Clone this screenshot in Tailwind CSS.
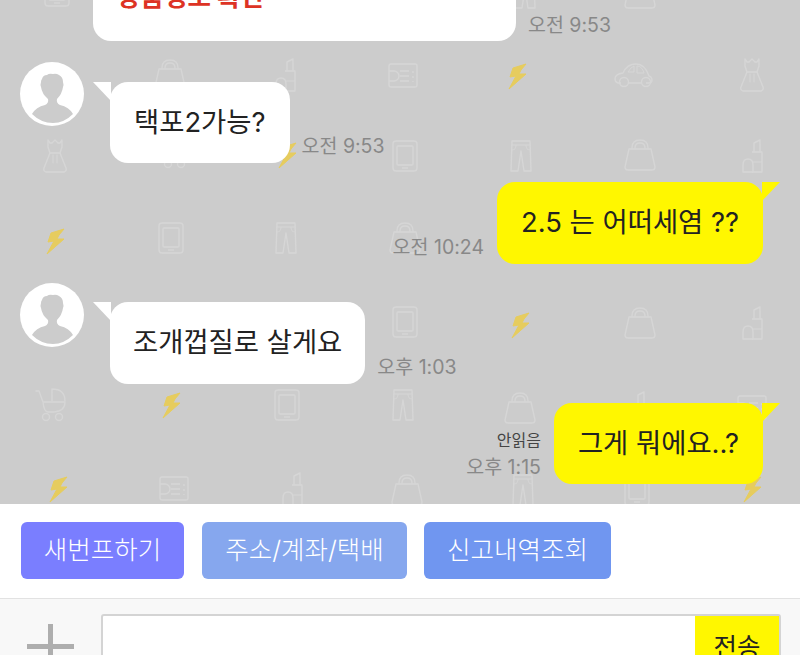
<!DOCTYPE html>
<html lang="ko">

<head>
    <meta charset="UTF-8" />
    <title>채팅</title>
    <script src="https://cdn.jsdelivr.net/npm/@tailwindcss/browser@4"></script>
</head>

<body class="w-[800px] h-[655px] overflow-hidden bg-white font-['Inter','Noto_Sans_CJK_KR',sans-serif]">

    <!-- chat - start -->
    <div class="relative h-[504px] overflow-hidden bg-[#cccccc]">

        <!-- wallpaper -->
        <svg class="absolute left-0 top-0" width="800" height="504" viewBox="0 0 800 504" fill="none">
            <defs>
                <g id="dress" stroke="#d6d6d6" stroke-width="1.4" stroke-linejoin="round" stroke-linecap="round">
                    <path d="M-7 -16v7l2 6h10l2 -6v-7l-2 3h-2l-3 -3l-3 3h-2z" />
                    <path d="M-5 -3l-6 15q-1 3 2 4h18q3 -1 2 -4l-6 -15" />
                    <path d="M-2 -1v8M2 -1v8" stroke-width="1" />
                </g>
                <g id="bag" stroke="#d6d6d6" stroke-width="1.4" stroke-linejoin="round">
                    <path d="M-11 -6h22l4 18q0 3 -3 3h-24q-3 0 -3 -3z" />
                    <path d="M-8 -6v-1q0 -8 8 -8t8 8v1M-5 -6v-1q0 -5 5 -5t5 5v1" />
                </g>
                <g id="lipstick" stroke="#d6d6d6" stroke-width="1.4" stroke-linejoin="round">
                    <path d="M2 -4v-9l6 -3v12" />
                    <path d="M0 -4h10v20h-10" />
                    <path d="M-9 16v-7q0 -6 5 -6t5 6v7z" />
                    <path d="M0 6h10" stroke-width="1" />
                </g>
                <g id="tablet" stroke="#d6d6d6" stroke-width="1.4" stroke-linejoin="round">
                    <rect x="-12" y="-15" width="24" height="30" rx="3" />
                    <rect x="-8" y="-10" width="16" height="19" rx="1" />
                    <path d="M-3 12h6" />
                </g>
                <g id="pants" stroke="#d6d6d6" stroke-width="1.4" stroke-linejoin="round">
                    <path d="M-9 -15h18l1 30h-7l-3 -20l-3 20h-7z" />
                    <path d="M-9 -11h18M-5 -11q0 5 -4 5M5 -11q0 5 4 5" stroke-width="1" />
                </g>
                <g id="wallet" stroke="#d6d6d6" stroke-width="1.4" stroke-linejoin="round">
                    <rect x="-14" y="-12" width="28" height="23" rx="2" />
                    <path d="M-14 -5h5a5 5 0 0 1 0 10h-5" />
                    <path d="M-3 -5h9M-3 0h9M-3 5h9M10 -5v2M10 0v2M10 5v1" />
                </g>
                <g id="car" stroke="#d6d6d6" stroke-width="1.4" stroke-linejoin="round">
                    <path d="M-13 7h-3q-3 -1 -3 -4q0 -5 8 -6q4 -9 13 -9q9 0 13 12q3 1 3 4q0 3 -3 3h-3M-6 7h13" />
                    <circle cx="-10" cy="6" r="4.5" />
                    <circle cx="12" cy="6" r="4.5" />
                    <path d="M-6 -4q3 -5 6 -6v6zM3 -10q5 0 7 7h-7z" stroke-width="1" />
                </g>
                <g id="stroller" stroke="#d6d6d6" stroke-width="1.4" stroke-linejoin="round" stroke-linecap="round">
                    <path d="M-14 -14h3l4 11h22q0 9 -11 10h-6q-4 0 -5 -10" />
                    <path d="M2 -4v-12q13 0 13 12" />
                    <circle cx="-4" cy="12" r="3.5" />
                    <circle cx="9" cy="12" r="3.5" />
                </g>
                <path id="bolt" d="M9 -12L-4 -8L-7 1L-1 0L-8 13L9 -2L2 -2L4 -6z" fill="#e6cc5e" stroke="#e6cc5e" stroke-width="1" stroke-linejoin="round" />
            </defs>

            <use href="#tablet" x="57" y="-9" />
            <use href="#pants" x="525" y="-7" />
            <use href="#bag" x="640" y="-7" />
            <use href="#bag" x="170" y="75" />
            <use href="#lipstick" x="285" y="75" />
            <use href="#wallet" x="403" y="76" />
            <use href="#bolt" x="517" y="76" />
            <use href="#car" x="634" y="76" />
            <use href="#dress" x="752" y="75" />
            <use href="#dress" x="55" y="156" />
            <use href="#stroller" x="172" y="152" />
            <use href="#bolt" x="287" y="155" />
            <use href="#tablet" x="405" y="156" />
            <use href="#pants" x="521" y="156" />
            <use href="#bag" x="640" y="155" />
            <use href="#lipstick" x="752" y="156" />
            <use href="#bolt" x="55" y="241" />
            <use href="#tablet" x="171" y="238" />
            <use href="#pants" x="286" y="238" />
            <use href="#bag" x="405" y="238" />
            <use href="#tablet" x="405" y="322" />
            <use href="#bolt" x="520" y="325" />
            <use href="#bag" x="640" y="323" />
            <use href="#lipstick" x="752" y="323" />
            <use href="#stroller" x="50" y="405" />
            <use href="#bolt" x="171" y="405" />
            <use href="#tablet" x="287" y="405" />
            <use href="#pants" x="403" y="405" />
            <use href="#bag" x="520" y="408" />
            <use href="#lipstick" x="636" y="408" />
            <use href="#wallet" x="752" y="408" />
            <use href="#bolt" x="58" y="489" />
            <use href="#wallet" x="174" y="489" />
            <use href="#lipstick" x="292" y="489" />
            <use href="#bag" x="407" y="490" />
            <use href="#pants" x="523" y="490" />
            <use href="#tablet" x="637" y="490" />
            <use href="#bolt" x="752" y="489" />
        </svg>

        <div class="relative flex flex-col gap-[19px] px-[20px] pr-[37px] -mt-[59px]">

            <!-- first message, cut off by the top edge -->
            <div class="flex items-end gap-[12px] pl-[73px] mb-[2px]">
                <div class="w-[423px] h-[100px] bg-white rounded-b-[18px] pl-[24px] pr-[24px] pt-[40px] flex justify-between">
                    <span class="text-[25.5px] leading-[32px] font-bold text-[#dd3324]">상품정보 확인</span>
                    <svg class="mt-[-8px]" width="14" height="30" viewBox="0 0 14 30" fill="none" stroke="#dd3324" stroke-width="2"><path d="M2 6l9 9l-9 9" /></svg>
                </div>
                <span class="text-[19.5px] leading-[24px] text-[#888888] mb-[4px]">오전 9:53</span>
            </div>

            <!-- incoming -->
            <div class="flex items-start">
                <svg class="shrink-0" width="64" height="64" viewBox="0 0 64 64">
                    <circle cx="32" cy="32" r="32" fill="#ffffff" />
                    <path d="M12 52q4 -7 13 -9q4 -2 3 -6q-6 -5 -7 -12q-1 -2 0 -5q0 -2 1 -3q1 -4 5 -4q2 -2 6 -1q3 -1 6 1q4 2 4 7q1 3 0 5q-1 7 -6 12q-1 4 3 6q9 2 13 9q-9 9 -20 9q-12 0 -21 -9z" fill="#cccccc" />
                </svg>
                <div class="relative mt-[20px] ml-[26px] h-[81px] flex items-center bg-white rounded-[18px] px-[24px] pt-[1px] text-[27.4px] text-[#222222]">
                    <svg class="absolute left-[-17px] top-0" width="18" height="19" viewBox="0 0 18 19"><path d="M0 0h18v19z" fill="#ffffff" /></svg>
                    택포2가능?
                </div>
                <span class="self-end ml-[12px] text-[19.5px] leading-[24px] text-[#888888] mb-[5px]">오전 9:53</span>
            </div>

            <!-- outgoing -->
            <div class="flex items-end justify-end">
                <span class="mr-[13px] text-[19.5px] leading-[24px] text-[#888888] mb-[5px]">오전 10:24</span>
                <div class="relative h-[82px] flex items-center bg-[#fff700] rounded-[18px] px-[24px] text-[27.4px] text-[#222222]">
                    <svg class="absolute right-[-17px] top-0" width="18" height="19" viewBox="0 0 18 19"><path d="M18 0h-18v19z" fill="#fff700" /></svg>
                    2.5 는 어떠세염 ??
                </div>
            </div>

            <!-- incoming -->
            <div class="flex items-start">
                <svg class="shrink-0" width="64" height="64" viewBox="0 0 64 64">
                    <circle cx="32" cy="32" r="32" fill="#ffffff" />
                    <path d="M12 52q4 -7 13 -9q4 -2 3 -6q-6 -5 -7 -12q-1 -2 0 -5q0 -2 1 -3q1 -4 5 -4q2 -2 6 -1q3 -1 6 1q4 2 4 7q1 3 0 5q-1 7 -6 12q-1 4 3 6q9 2 13 9q-9 9 -20 9q-12 0 -21 -9z" fill="#cccccc" />
                </svg>
                <div class="relative mt-[19px] ml-[26px] h-[82px] flex items-center bg-white rounded-[18px] px-[23px] text-[27.4px] text-[#222222]">
                    <svg class="absolute left-[-17px] top-0" width="18" height="19" viewBox="0 0 18 19"><path d="M0 0h18v19z" fill="#ffffff" /></svg>
                    조개껍질로 살게요
                </div>
                <span class="self-end ml-[12px] text-[19.5px] leading-[24px] text-[#888888] mb-[5px]">오후 1:03</span>
            </div>

            <!-- outgoing, unread -->
            <div class="flex items-end justify-end">
                <div class="flex flex-col items-end mr-[13px] mb-[5px]">
                    <span class="text-[16px] leading-[22px] text-[#444444] mb-[4px]">안읽음</span>
                    <span class="text-[19.5px] leading-[24px] text-[#888888]">오후 1:15</span>
                </div>
                <div class="relative h-[81px] flex items-center bg-[#fff700] rounded-[18px] px-[24px] text-[27.4px] text-[#222222]">
                    <svg class="absolute right-[-17px] top-0" width="18" height="19" viewBox="0 0 18 19"><path d="M18 0h-18v19z" fill="#fff700" /></svg>
                    그게 뭐에요..?
                </div>
            </div>
        </div>
    </div>
    <!-- chat - end -->

    <!-- quick buttons -->
    <div class="h-[94px] flex items-start gap-[17px] pl-[21px] pt-[18px] bg-white">
        <button class="w-[163px] h-[57px] rounded-[6px] bg-[#7a7eff] text-white text-[25.5px] font-light">새번프하기</button>
        <button class="w-[205px] h-[57px] ml-[1px] rounded-[6px] bg-[#86a7ee] text-white text-[25.5px] font-light">주소/계좌/택배</button>
        <button class="w-[187px] h-[57px] rounded-[6px] bg-[#7096f0] text-white text-[25.5px] font-light">신고내역조회</button>
    </div>

    <!-- input bar -->
    <div class="h-[57px] flex items-start bg-[#f8f8f8] border-t border-[#e2e2e2] pt-[15px] pl-[27px]">
        <svg class="shrink-0 mt-[10px]" width="47" height="47" viewBox="0 0 47 47"><path d="M21 0h5v20h21v5h-21v22h-5v-22h-21v-5h21z" fill="#aeaeae" /></svg>
        <div class="ml-[27px] w-[680px] h-[60px] flex justify-end bg-white border-2 border-[#d4d4d4] rounded-[3px]">
            <div class="w-[84px] h-full bg-[#fff700] text-center text-[25.5px] leading-[62px] text-[#222222]">전송</div>
        </div>
    </div>
</body>

</html>
